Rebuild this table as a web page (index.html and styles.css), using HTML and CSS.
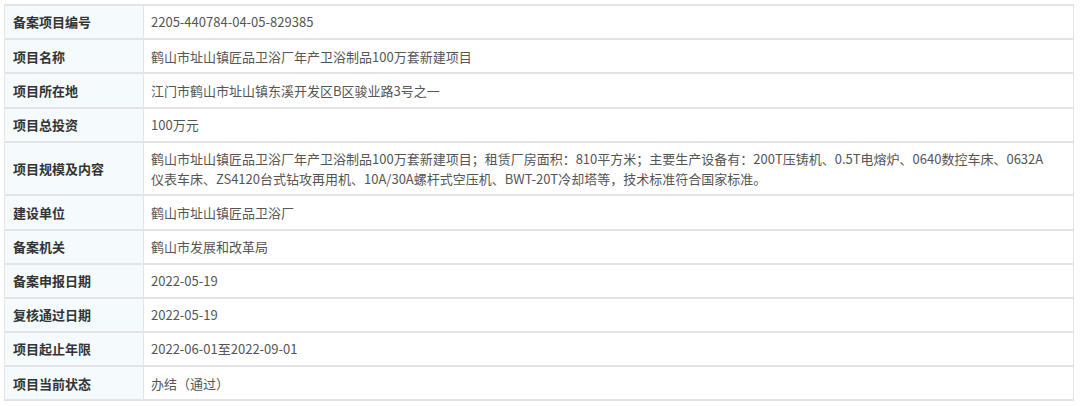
FILE: index.html
```html
<!DOCTYPE html>
<html lang="zh-CN">
<head>
    <meta charset="UTF-8">
    <meta name="viewport" content="width=device-width, initial-scale=1.0">
    <title>项目备案信息</title>
    <link rel="stylesheet" href="styles.css">
</head>
<body>
    <div class="record-wrap">
        <table class="record-table">
            <tr>
                <th>备案项目编号</th>
                <td>2205-440784-04-05-829385</td>
            </tr>
            <tr>
                <th>项目名称</th>
                <td>鹤山市址山镇匠品卫浴厂年产卫浴制品100万套新建项目</td>
            </tr>
            <tr>
                <th>项目所在地</th>
                <td>江门市鹤山市址山镇东溪开发区B区骏业路3号之一</td>
            </tr>
            <tr>
                <th>项目总投资</th>
                <td>100万元</td>
            </tr>
            <tr>
                <th>项目规模及内容</th>
                <td>鹤山市址山镇匠品卫浴厂年产卫浴制品100万套新建项目；租赁厂房面积：810平方米；主要生产设备有：200T压铸机、0.5T电熔炉、0640数控车床、0632A仪表车床、ZS4120台式钻攻再用机、10A/30A螺杆式空压机、BWT-20T冷却塔等，技术标准符合国家标准。</td>
            </tr>
            <tr>
                <th>建设单位</th>
                <td>鹤山市址山镇匠品卫浴厂</td>
            </tr>
            <tr>
                <th>备案机关</th>
                <td>鹤山市发展和改革局</td>
            </tr>
            <tr>
                <th>备案申报日期</th>
                <td>2022-05-19</td>
            </tr>
            <tr>
                <th>复核通过日期</th>
                <td>2022-05-19</td>
            </tr>
            <tr>
                <th>项目起止年限</th>
                <td>2022-06-01至2022-09-01</td>
            </tr>
            <tr>
                <th>项目当前状态</th>
                <td>办结（通过）</td>
            </tr>
        </table>
    </div>
</body>
</html>
```

FILE: styles.css
```css
body {
    margin: 0;
    background-color: #fff;
    font-family: "Noto Sans CJK SC", "Noto Sans", sans-serif;
    font-size: 13px;
}

.record-wrap {
    padding: 4px 6px 0 4px;
}

.record-table {
    width: 100%;
    border-collapse: collapse;
    border: 1px solid #dedede;
}

.record-table th,
.record-table td {
    border: 1px solid #e4e4e4;
    border-width: 2px 1px;
    padding: 6.4px 8px;
    line-height: 19.4px;
    text-align: left;
    vertical-align: middle;
}

.record-table th {
    width: 122px;
    background-color: #f5fbfc;
    color: #333;
    font-weight: bold;
    white-space: nowrap;
}

.record-table td {
    padding-left: 7px;
    padding-right: 18px;
    color: #555;
}
```
